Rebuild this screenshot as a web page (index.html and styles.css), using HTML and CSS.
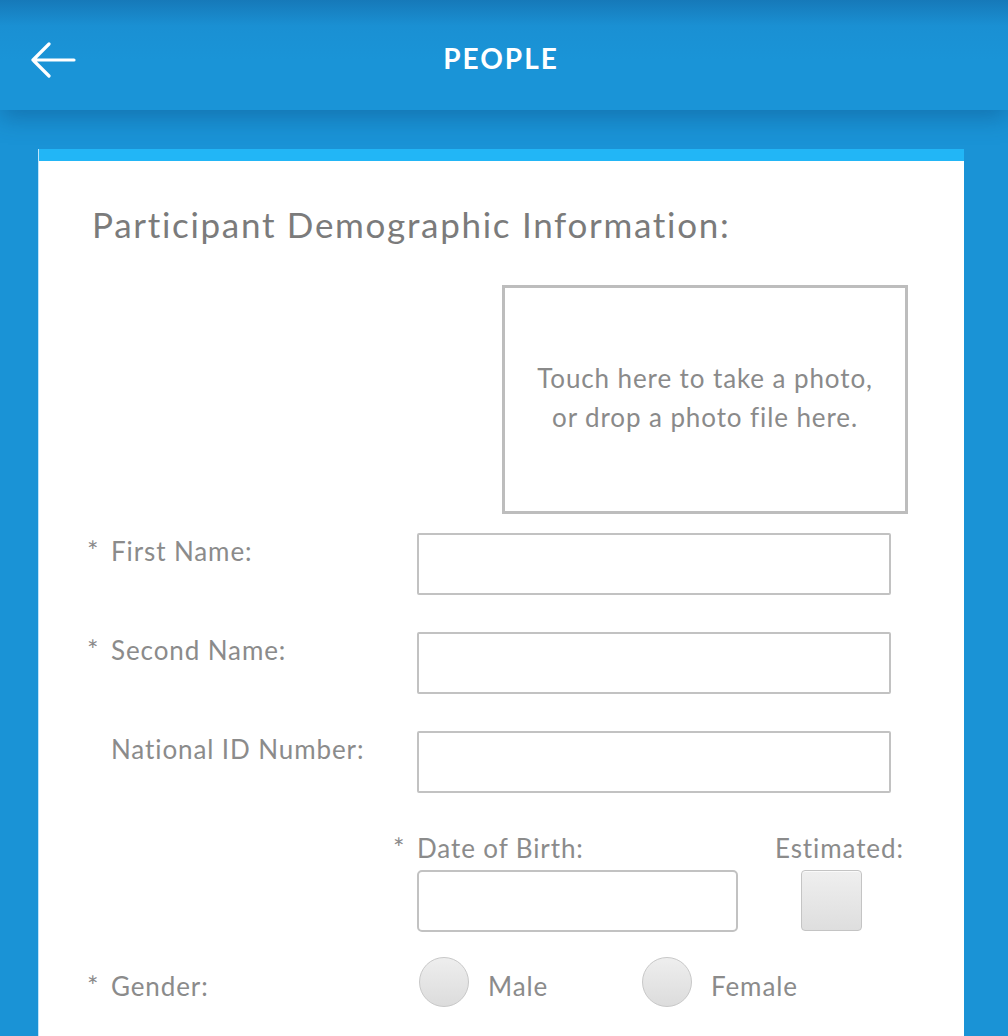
FILE: index.html
```html
<!DOCTYPE html>
<html lang="en">
<head>
<meta charset="utf-8">
<title>People</title>
<link rel="stylesheet" href="styles.css">
</head>
<body>
<header class="topbar">
  <div class="topbar-left">
    <svg class="back" width="46" height="36" viewBox="0 0 46 36" aria-hidden="true">
      <path d="M44 18 H3 M19 2 L3 18 L19 34" fill="none" stroke="#fff" stroke-width="3.2" stroke-linecap="round" stroke-linejoin="round"/>
    </svg>
  </div>
  <h1 class="topbar-title">PEOPLE</h1>
  <div class="topbar-right"></div>
</header>

<main class="card">
  <h2 class="card-title">Participant Demographic Information:</h2>

  <div class="photo-row">
    <div class="photo-box">
      <p>Touch here to take a photo,<br>or drop a photo file here.</p>
    </div>
  </div>

  <div class="field">
    <label class="label"><span class="req">*</span>First Name:</label>
    <div class="input"></div>
  </div>
  <div class="field">
    <label class="label"><span class="req">*</span>Second Name:</label>
    <div class="input"></div>
  </div>
  <div class="field">
    <label class="label"><span class="req"></span>National ID Number:</label>
    <div class="input"></div>
  </div>

  <div class="dob-row">
    <div class="dob">
      <label class="label dob-label"><span class="req">*</span>Date of Birth:</label>
      <div class="input input-round"></div>
    </div>
    <div class="estimated">
      <label class="label">Estimated:</label>
      <div class="checkbox"></div>
    </div>
  </div>

  <div class="gender-row">
    <label class="label"><span class="req">*</span>Gender:</label>
    <div class="radios">
      <div class="radio-opt"><span class="radio"></span><span class="radio-text">Male</span></div>
      <div class="radio-opt"><span class="radio"></span><span class="radio-text">Female</span></div>
    </div>
  </div>
</main>
</body>
</html>
```

FILE: styles.css
```css
html, body {
  margin: 0;
  padding: 0;
  height: 1036px;
  overflow: hidden;
  background: #1a93d6;
  font-family: "Lato", "Noto Sans", sans-serif;
}

.topbar {
  position: relative;
  z-index: 2;
  height: 110px;
  display: grid;
  grid-template-columns: 1fr auto 1fr;
  align-items: center;
  background: linear-gradient(#1679b9 0px, #1a90d3 26px, #1a94d7 60px, #1a94d7 110px);
  box-shadow: 0 8px 22px rgba(10, 60, 110, 0.35);
}

.topbar-left {
  padding-left: 30px;
  display: flex;
  align-items: center;
  padding-top: 10px;
}

.topbar-title {
  margin: 0;
  padding-top: 5px;
  color: #fff;
  font-size: 28px;
  font-weight: 700;
  letter-spacing: 2px;
  padding-right: 6px;
}

.card {
  margin: 39px 44px 0 39px;
  background: #fff;
  border-top: 12px solid #22b6f6;
  box-shadow: -1px 0 0 #bfe4fb;
  min-height: 1000px;
  padding-top: 43px;
  box-sizing: border-box;
}

.card-title {
  margin: 0 0 0 53px;
  font-size: 35px;
  line-height: 40px;
  font-weight: 400;
  letter-spacing: 1.7px;
  color: #7b7b7b;
}

.photo-row {
  display: flex;
  justify-content: flex-end;
  padding-right: 56px;
  margin-top: 41px;
}

.photo-box {
  width: 406px;
  height: 229px;
  box-sizing: border-box;
  border: 3px solid #bdbdbd;
  display: flex;
  align-items: center;
  justify-content: center;
}

.photo-box p {
  margin: 0 0 4px 0;
  text-align: center;
  font-size: 26px;
  line-height: 39px;
  letter-spacing: 0.9px;
  color: #8a8a8a;
}

.label {
  display: block;
  font-size: 26px;
  line-height: 30px;
  letter-spacing: 0.9px;
  color: #8b8b8b;
  white-space: nowrap;
}

.req {
  display: inline-block;
  width: 24px;
  font-size: 27px;
  letter-spacing: 0;
  color: #8a8a8a;
  vertical-align: top;
  line-height: 30px;
}

.field {
  display: grid;
  grid-template-columns: 330px 474px;
  margin-left: 48px;
  margin-top: 19px;
}
.field + .field {
  margin-top: 37px;
}

.field .label {
  padding-top: 3px;
}

.input {
  height: 62px;
  box-sizing: border-box;
  border: 2px solid #c2c2c2;
  border-radius: 2px;
  background: #fff;
}

.input-round {
  border-radius: 5px;
}

.dob-row {
  display: flex;
  margin-left: 378px;
  margin-top: 40px;
}

.dob {
  width: 321px;
}

.dob-label {
  margin-left: -24px;
  margin-bottom: 7px;
}

.estimated {
  margin-left: 37px;
}

.checkbox {
  width: 61px;
  height: 61px;
  box-sizing: border-box;
  margin: 7px 0 0 26px;
  border: 1px solid #c4c4c4;
  border-radius: 4px;
  background: linear-gradient(#efefef, #dedede);
  box-shadow: inset 0 1px 0 #fafafa;
}

.gender-row {
  display: grid;
  grid-template-columns: 332px auto;
  margin-left: 48px;
  margin-top: 25px;
  align-items: center;
}

.gender-row .label {
  padding-top: 8px;
}

.radios {
  display: flex;
}

.radio-opt {
  display: flex;
  align-items: center;
  width: 223px;
}

.radio {
  display: inline-block;
  width: 50px;
  height: 50px;
  box-sizing: border-box;
  border-radius: 50%;
  border: 1px solid #c8c8c8;
  background: linear-gradient(#eeeeee, #dcdcdc);
}

.radio-text {
  margin-left: 19px;
  font-size: 26px;
  letter-spacing: 0.9px;
  color: #8b8b8b;
  padding-top: 8px;
}
```
